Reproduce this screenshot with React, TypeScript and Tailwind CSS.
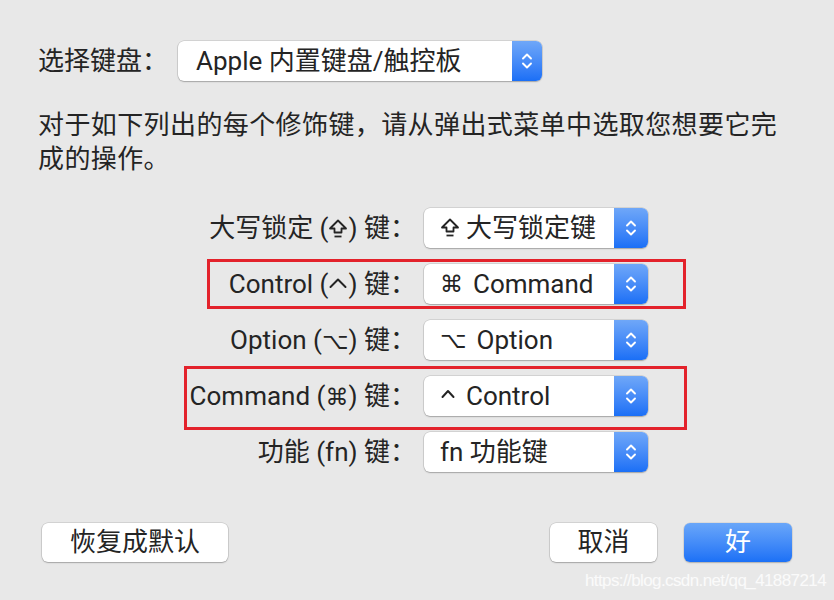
function Chevrons() {
  return (
    <svg width="12" height="22" viewBox="0 0 12 22" fill="none" stroke="white" strokeWidth="1.9" strokeLinecap="round" strokeLinejoin="round">
      <path d="M2 8.5 L6 4.5 L10 8.5" />
      <path d="M2 13.5 L6 17.5 L10 13.5" />
    </svg>
  );
}

function CapsLock() {
  return (
    <svg width="20" height="22" viewBox="0 0 20 22" fill="none" stroke="currentColor" strokeWidth="1.8" strokeLinejoin="round" className="inline-block align-[-3px]">
      <path d="M10 2.5 L18 10.5 H13.5 V14.5 H6.5 V10.5 H2 Z" />
      <path d="M6.5 18.5 H13.5" />
    </svg>
  );
}

function Caret({ wide }: { wide?: boolean }) {
  return wide ? (
    <svg width="20" height="20" viewBox="0 0 20 20" fill="none" stroke="currentColor" strokeWidth="2" strokeLinecap="round" strokeLinejoin="round" className="inline-block align-[-2px]">
      <path d="M2.5 12 L10 4.5 L17.5 12" />
    </svg>
  ) : (
    <svg width="16" height="20" viewBox="0 0 16 20" fill="none" stroke="currentColor" strokeWidth="2" strokeLinecap="round" strokeLinejoin="round" className="inline-block align-[-2px]">
      <path d="M2.5 11 L8 5 L13.5 11" />
    </svg>
  );
}

function Sym({ children }: { children: React.ReactNode }) {
  return <span className="font-['DejaVu_Sans',sans-serif] text-[23px]">{children}</span>;
}

function Popup({ width, stepper, pad, children }: { width: string; stepper: string; pad: string; children: React.ReactNode }) {
  return (
    <div className={`flex h-[40px] ${width} rounded-[6px] bg-white shadow-[0_0_0_0.5px_rgba(0,0,0,0.18),0_1px_1.5px_rgba(0,0,0,0.22)]`}>
      <div className={`flex flex-1 items-center ${pad} whitespace-nowrap`}>{children}</div>
      <div className={`flex ${stepper} items-center justify-center rounded-r-[6px] bg-gradient-to-b from-[#6fa7f8] to-[#1a6ff6]`}>
        <Chevrons />
      </div>
    </div>
  );
}

const rows = [
  {
    label: <>大写锁定 (<CapsLock />) 键：</>,
    value: <span className="flex items-center gap-[6px]"><CapsLock />大写锁定键</span>,
  },
  {
    label: <>Control (<Caret wide />) 键：</>,
    value: <span className="flex items-center gap-[10px]"><Sym>⌘</Sym>Command</span>,
    box: 'left-[207px] top-[-5px] w-[479px] h-[50px]',
  },
  {
    label: <>Option (<Sym>⌥</Sym>) 键：</>,
    value: <span className="flex items-center gap-[10px]"><Sym>⌥</Sym>Option</span>,
  },
  {
    label: <>Command (<Sym>⌘</Sym>) 键：</>,
    value: <span className="flex items-center gap-[10px]"><Caret />Control</span>,
    box: 'left-[184px] top-[-10px] w-[503px] h-[64px]',
  },
  {
    label: <>功能 (fn) 键：</>,
    value: <>fn 功能键</>,
  },
];

export default function App() {
  return (
    <div className="relative h-[600px] w-[834px] overflow-hidden bg-[#e8e8e8] font-['Roboto','Noto_Sans_CJK_SC',sans-serif] text-[26px] text-[#242424]">
      <div className="flex items-center pl-[38px] pt-[41px]">
        <span className="w-[140px] whitespace-nowrap">选择键盘：</span>
        <Popup width="w-[364px]" stepper="w-[30px]" pad="pl-[18px]">Apple 内置键盘/触控板</Popup>
      </div>

      <p className="ml-[38px] mt-[27px] w-[760px] leading-[34px] tracking-[0.4px]">
        对于如下列出的每个修饰键，请从弹出式菜单中选取您想要它完成的操作。
      </p>

      <div className="mt-[32px] flex flex-col gap-[16px]">
        {rows.map((row, i) => (
          <div key={i} className="relative flex h-[40px] items-center">
            <span className="w-[416px] whitespace-nowrap text-right">{row.label}</span>
            <div className="ml-[8px]">
              <Popup width="w-[224px]" stepper="w-[34px]" pad="pl-[16px]">{row.value}</Popup>
            </div>
            {row.box && <div className={`absolute border-[3px] border-[#e3222b] ${row.box}`} />}
          </div>
        ))}
      </div>

      <div className="mt-[51px] flex items-center px-[42px]">
        <button className="h-[39px] w-[186px] rounded-[6px] bg-white shadow-[0_0_0_0.5px_rgba(0,0,0,0.18),0_1px_1.5px_rgba(0,0,0,0.22)]">恢复成默认</button>
        <div className="flex-1" />
        <button className="h-[39px] w-[107px] rounded-[6px] bg-white shadow-[0_0_0_0.5px_rgba(0,0,0,0.18),0_1px_1.5px_rgba(0,0,0,0.22)]">取消</button>
        <button className="ml-[27px] h-[39px] w-[108px] rounded-[6px] bg-gradient-to-b from-[#69a6f9] to-[#1b70f6] text-white shadow-[0_0_0_0.5px_rgba(0,0,0,0.1),0_1px_1.5px_rgba(0,0,0,0.2)]">好</button>
      </div>

      <div className="absolute bottom-[7px] right-[8px] font-['Liberation_Sans',Arial,sans-serif] text-[17px] tracking-[-0.6px] text-white/80">
        https://blog.csdn.net/qq_41887214
      </div>
    </div>
  );
}
